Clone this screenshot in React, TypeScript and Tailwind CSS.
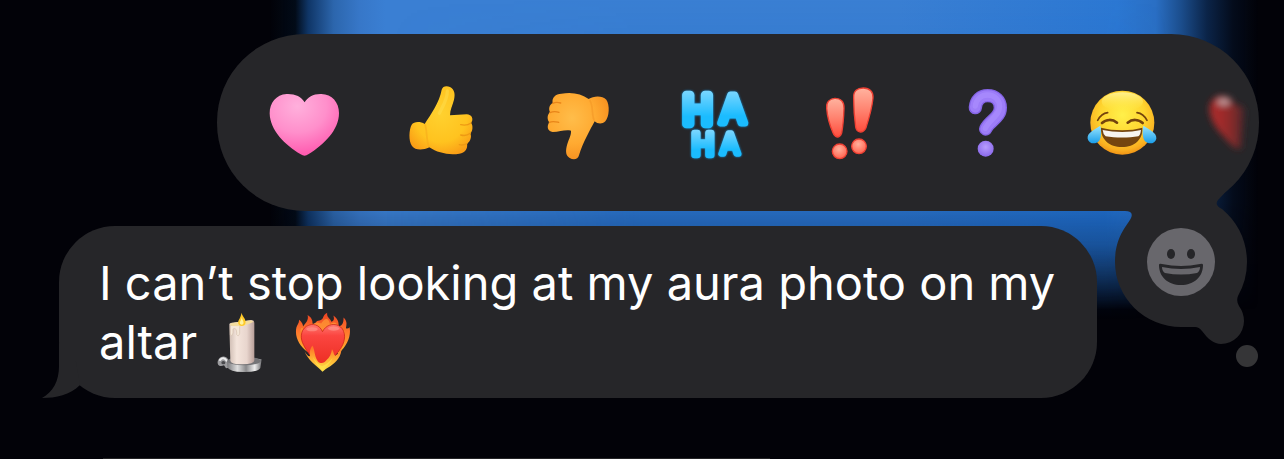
import React from "react";

type IconProps = { className?: string };

const ICON = "h-20 w-20 shrink-0 overflow-visible";

function PinkHeart() {
  return (
    <svg className={ICON} viewBox="42 22 240 240" aria-hidden="true">
      <defs>
        <radialGradient id="pinkHeart" cx="0.4" cy="0.2" r="0.85">
          <stop offset="0" stopColor="#ffb0dc" />
          <stop offset="0.5" stopColor="#ff8fcb" />
          <stop offset="1" stopColor="#ff52ab" />
        </radialGradient>
      </defs>
      <path
        d="M164 80C154 62 134 54 110 55C78 57 59 82 59 113C60 164 105 208 152 236Q164 244 175 236C223 206 267 163 267 112C267 80 246 56 214 55C191 54 173 64 164 80Z"
        fill="url(#pinkHeart)"
      />
    </svg>
  );
}

function ThumbUp() {
  return (
    <svg className={ICON} viewBox="450 22 240 240" aria-hidden="true">
      <defs>
        <radialGradient id="thumbUp" cx="0.5" cy="0.4" r="0.65">
          <stop offset="0" stopColor="#ffd12f" />
          <stop offset="0.65" stopColor="#ffc31f" />
          <stop offset="1" stopColor="#fa9d16" />
        </radialGradient>
      </defs>
      <path
        d="M575 42C578 31 590 29 600 34C614 41 616 56 612 72C608 88 600 102 600 119L650 116C666 116 672 132 663 142C670 149 668 168 661 173C666 184 661 198 651 204C654 219 645 231 628 234C597 239 563 232 538 215C518 225 495 224 486 211C475 195 477 161 485 147C491 138 510 136 524 145C542 116 569 79 575 42Z"
        fill="url(#thumbUp)"
      />
      <path d="M632 147C642 149 655 148 663 142M632 178C642 181 653 179 661 173M628 207C636 209 643 208 651 204" fill="none" stroke="#ee9a14" strokeWidth="4" strokeLinecap="round" />
      <path d="M525 147C532 165 528 192 537 213" fill="none" stroke="#f5a51a" strokeWidth="5" strokeLinecap="round" opacity="0.5" />
      <path d="M592 46C592 74 577 93 568 113" fill="none" stroke="#ffdd4d" strokeWidth="10" strokeLinecap="round" opacity="0.5" />
    </svg>
  );
}

function ThumbDown() {
  return (
    <svg className={ICON} viewBox="18 22 240 240" aria-hidden="true">
      <defs>
        <radialGradient id="thumbDown" cx="0.4" cy="0.38" r="0.7">
          <stop offset="0" stopColor="#ffbd4a" />
          <stop offset="0.55" stopColor="#ffaa31" />
          <stop offset="1" stopColor="#f58b1c" />
        </radialGradient>
      </defs>
      <path
        d="M68 82C65 65 77 55 94 54C126 48 154 54 176 70C191 60 217 59 229 72C240 88 238 123 226 137C217 146 204 146 194 137C182 160 157 203 147 239C144 252 130 254 119 247C105 239 107 222 112 205C117 189 124 178 123 165C104 161 90 169 68 169C53 168 49 152 58 140C51 132 51 117 60 110C55 99 58 88 68 82Z"
        fill="url(#thumbDown)"
      />
      <path d="M68 83C78 78 86 80 92 82M60 111C69 107 78 107 87 110M58 140C68 136 76 138 86 140" fill="none" stroke="#e98519" strokeWidth="4" strokeLinecap="round" />
      <path d="M180 75C190 92 185 118 192 133" fill="none" stroke="#ef9122" strokeWidth="5" strokeLinecap="round" opacity="0.45" />
    </svg>
  );
}

function HaHa() {
  return (
    <svg className={ICON} viewBox="426 22 240 240" aria-hidden="true">
      <defs>
        <linearGradient id="haha" x1="0" y1="0" x2="0" y2="1">
          <stop offset="0.1" stopColor="#7ad6ff" />
          <stop offset="0.65" stopColor="#1bbcff" />
        </linearGradient>
      </defs>
      <g
        className="drop-shadow-[0_0_3px_#1590d8]"
        fill="url(#haha)"
        stroke="url(#haha)"
        fontFamily="Inter, sans-serif"
        fontWeight="400"
        strokeLinejoin="round"
        strokeLinecap="round"
        textAnchor="middle"
      >
        <text x="503" y="145" fontSize="118" strokeWidth="26">H</text>
        <text x="608" y="141" fontSize="113" strokeWidth="21">A</text>
        <text x="519" y="238" fontSize="88" strokeWidth="20">H</text>
        <text x="600" y="236" fontSize="84" strokeWidth="16">A</text>
      </g>
    </svg>
  );
}

function Exclaim() {
  return (
    <svg className={ICON} viewBox="-6 22 240 240" aria-hidden="true">
      <defs>
        <linearGradient id="exclaim" x1="0" y1="0" x2="0" y2="1">
          <stop offset="0" stopColor="#ffb39f" />
          <stop offset="0.5" stopColor="#ff8370" />
          <stop offset="1" stopColor="#ff4d3d" />
        </linearGradient>
        <radialGradient id="exclaimDot" cx="0.45" cy="0.35" r="0.6">
          <stop offset="0" stopColor="#ffb09c" />
          <stop offset="1" stopColor="#ff6a56" />
        </radialGradient>
      </defs>
      <g stroke="#ee4033" strokeWidth="4">
        <path d="M50 98C48 79 59 69 74 68C92 67 103 78 102 98C101 126 99 152 95 172Q91 184 82 184Q74 183 69 171C59 148 52 124 50 98Z" fill="url(#exclaim)" />
        <path d="M131 66C130 46 142 37 160 37C180 37 190 49 189 67C186 99 177 128 168 156Q162 169 151 169Q139 168 137 154C133 125 131 96 131 66Z" fill="url(#exclaim)" />
        <circle cx="89" cy="227" r="22" fill="url(#exclaimDot)" />
        <circle cx="147" cy="212" r="22" fill="url(#exclaimDot)" />
      </g>
    </svg>
  );
}

function Question() {
  return (
    <svg className={ICON} viewBox="402 22 240 240" aria-hidden="true">
      <defs>
        <radialGradient id="questionDot" cx="0.5" cy="0.4" r="0.6">
          <stop offset="0" stopColor="#b79cff" />
          <stop offset="1" stopColor="#8a69ea" />
        </radialGradient>
      </defs>
      <g fill="none" strokeLinecap="round" strokeLinejoin="round">
        <path d="M496 96C498 73 512 60 533 60C556 60 571 75 571 96C571 127 539 134 527 160" stroke="#8464e4" strokeWidth="40" />
        <path d="M496 95C498 73 512 60 533 60C556 60 571 75 571 96C571 127 539 134 527 160" stroke="#9d7df8" strokeWidth="32" />
        <path d="M496 91C499 69 515 58 533 58C553 58 568 72 569 92C568 122 539 130 526 158" stroke="#a98cfd" strokeWidth="16" opacity="0.75" />
      </g>
      <circle cx="527" cy="219" r="24" fill="url(#questionDot)" />
    </svg>
  );
}

function TearsOfJoy() {
  return (
    <svg className={ICON} viewBox="30 22 240 240" aria-hidden="true">
      <defs>
        <radialGradient id="joyFace" cx="0.5" cy="0.38" r="0.64">
          <stop offset="0" stopColor="#fff04a" />
          <stop offset="0.55" stopColor="#ffd52f" />
          <stop offset="0.85" stopColor="#fab021" />
          <stop offset="1" stopColor="#ee8c12" />
        </radialGradient>
        <linearGradient id="joyTear" x1="0" y1="0" x2="0" y2="1">
          <stop offset="0" stopColor="#9be6ff" />
          <stop offset="1" stopColor="#1a9eea" />
        </linearGradient>
        <linearGradient id="joyShine" x1="0" y1="0" x2="0" y2="1">
          <stop offset="0" stopColor="#fff7a8" stopOpacity="0.8" />
          <stop offset="1" stopColor="#fff04a" stopOpacity="0" />
        </linearGradient>
      </defs>
      <circle cx="157" cy="141" r="96" fill="url(#joyFace)" />
      <ellipse cx="157" cy="78" rx="62" ry="28" fill="url(#joyShine)" />
      <g fill="none" stroke="#74430d" strokeLinecap="round">
        <path d="M83 134C90 121 99 113 113 111M231 134C224 121 215 113 201 111" strokeWidth="5" />
        <path d="M96 142C108 130 128 130 141 141M173 141C186 130 206 130 218 142" strokeWidth="8" />
      </g>
      <path d="M93 156C130 166 184 166 217 156C220 190 194 214 156 214C118 214 91 190 93 156Z" fill="#75450f" />
      <path d="M98 163C134 171 180 171 213 163C212 173 209 180 205 182C176 187 136 187 107 182Q99 175 98 163Z" fill="#f7f4ef" />
      <path d="M91 150C94 166 96 190 84 199C73 207 56 203 53 189C50 171 72 163 91 150Z" fill="url(#joyTear)" />
      <path d="M220 150C217 166 216 190 228 199C239 207 256 203 259 189C261 171 240 163 220 150Z" fill="url(#joyTear)" />
    </svg>
  );
}

function FadingHeart() {
  return (
    <svg className={ICON} viewBox="354 22 240 240" aria-hidden="true">
      <defs>
        <linearGradient id="fadingHeart" x1="0" x2="1">
          <stop offset="0.3" stopColor="#a42a2a" />
          <stop offset="0.65" stopColor="#842a2a" />
          <stop offset="1" stopColor="#462729" />
        </linearGradient>
        <filter id="fadingBlur" x="-0.5" y="-0.4" width="2" height="1.8">
          <feGaussianBlur stdDeviation="9" />
        </filter>
      </defs>
      <g filter="url(#fadingBlur)">
        <path d="M418 99C420 71 440 58 462 60C482 62 490 75 497 90Q518 82 524 108L514 218Q500 224 486 210C452 174 418 140 418 99Z" fill="url(#fadingHeart)" />
        <ellipse cx="461" cy="78" rx="20" ry="12" fill="#b99091" />
      </g>
    </svg>
  );
}

function Candle({ className }: IconProps) {
  return (
    <svg className={className} viewBox="50 48 141 183" role="img" aria-label="candle">
      <defs>
        <linearGradient id="wax" x1="0" x2="1">
          <stop offset="0" stopColor="#cfbdb3" />
          <stop offset="0.3" stopColor="#f4e5dc" />
          <stop offset="0.7" stopColor="#e8d5cd" />
          <stop offset="1" stopColor="#b89f99" />
        </linearGradient>
        <linearGradient id="metal" x1="0" x2="1">
          <stop offset="0" stopColor="#77777a" />
          <stop offset="0.3" stopColor="#dedede" />
          <stop offset="0.55" stopColor="#89898b" />
          <stop offset="0.8" stopColor="#eeeeee" />
          <stop offset="1" stopColor="#707073" />
        </linearGradient>
      </defs>
      <path d="M74 208C58 216 51 202 57 191C63 180 80 178 86 190L96 214L80 217Z" fill="#9c9c9f" />
      <path d="M62 192Q72 180 82 194" fill="none" stroke="#ededed" strokeWidth="6" strokeLinecap="round" />
      <ellipse cx="72" cy="200" rx="6" ry="5" fill="#4a4a4d" />
      <path d="M83 194Q130 180 187 190L183 216Q176 229 130 228Q91 228 84 214Z" fill="url(#metal)" />
      <ellipse cx="134" cy="195" rx="50" ry="13" fill="#747477" />
      <path d="M90 88Q88 79 101 80L155 72Q165 71 165 82V193Q165 205 129 205Q93 205 93 194Z" fill="url(#wax)" />
      <path d="M92 88Q119 99 163 77L155 73L101 80Q91 81 92 88Z" fill="#f4dda0" />
      <path d="M93 90V117Q99 123 101 111V99Q110 93 112 108V116Q118 124 121 112V91" fill="#f5e8d9" stroke="#d4c0ad" strokeWidth="2" />
      <path d="M126 50C130 62 144 73 137 85C133 92 120 91 117 83C114 73 126 65 126 50Z" fill="#ffc928" />
      <path d="M127 64C129 74 136 78 131 85Q126 88 122 83C120 77 127 72 127 64Z" fill="#fff3a0" />
    </svg>
  );
}

function HeartOnFire({ className }: IconProps) {
  return (
    <svg className={className} viewBox="290 48 165 180" role="img" aria-label="heart on fire">
      <defs>
        <linearGradient id="flame" x1="0" y1="0" x2="0" y2="1">
          <stop offset="0" stopColor="#ed4223" />
          <stop offset="0.5" stopColor="#ff7b2d" />
          <stop offset="1" stopColor="#ffb52e" />
        </linearGradient>
        <linearGradient id="hotHeart" x1="0" y1="0" x2="0" y2="1">
          <stop offset="0" stopColor="#ff7770" />
          <stop offset="0.25" stopColor="#fb4540" />
          <stop offset="1" stopColor="#ea2a1e" />
        </linearGradient>
        <linearGradient id="flameFront" x1="0" y1="0" x2="0" y2="1">
          <stop offset="0" stopColor="#ff6a27" />
          <stop offset="0.5" stopColor="#ffb032" />
          <stop offset="1" stopColor="#ffe14a" />
        </linearGradient>
      </defs>
      <path
        d="M327 166C303 149 288 122 294 94C296 86 302 82 302 71C312 79 313 86 314 91C321 79 331 74 327 57C342 66 341 76 342 83C354 83 350 73 362 73C376 71 370 57 385 50C382 65 395 67 397 77C406 75 406 66 403 58C420 70 418 81 419 89C427 91 434 83 433 64C445 75 442 86 440 96Q446 99 451 93C456 119 444 147 420 169Z"
        fill="url(#flame)"
      />
      <path d="M306 102Q309 88 317 101Q331 75 337 91Q350 73 367 82Q386 55 393 84Q411 71 415 92L437 105L434 140L312 145Z" fill="#ff9a34" opacity="0.7" />
      <path
        d="M371 106C362 85 342 80 324 90C304 103 306 129 315 145C326 170 350 192 366 215Q371 221 377 213C393 191 419 171 431 144C440 123 438 98 418 88C400 80 380 88 371 106Z"
        fill="url(#hotHeart)"
        stroke="#c3190f"
        strokeWidth="2"
      />
      <ellipse cx="340" cy="99" rx="17" ry="6" fill="#ffb0a4" opacity="0.45" />
      <ellipse cx="404" cy="97" rx="17" ry="6" fill="#ffb0a4" opacity="0.45" />
      <path
        d="M318 164C325 177 331 180 334 178C332 166 335 156 341 147C349 159 346 177 357 193C366 203 376 199 383 190C392 182 397 172 399 158C405 166 403 174 409 177C417 172 423 162 427 152C428 178 413 195 395 207Q382 214 371 224C352 206 328 190 318 164Z"
        fill="url(#flameFront)"
      />
      <path d="M341 176C347 190 358 203 370 208C384 203 394 193 401 184Q394 200 371 220Q350 204 341 176Z" fill="#ffe14a" opacity="0.8" />
    </svg>
  );
}

function AddReaction() {
  return (
    <svg className="block w-full overflow-visible" viewBox="1100 190 184 190" aria-hidden="true">
      <path
        d="M1110 180V211H1125Q1134 211 1131 218C1128 225 1115 236 1115 262A66 65 0 0 0 1181 327H1195Q1199 327 1202 331C1208 339 1214 344 1221 344A23 23 0 0 0 1244 321Q1244 313 1239 306Q1236 301 1238 296Q1247 280 1247 262C1247 241 1238 222 1222 209Q1214 205 1218 200L1234 183L1225 180Z"
        fill="#262629"
      />
      <circle cx="1247" cy="356" r="11" fill="#353537" />
      <circle cx="1181" cy="262" r="34" fill="#68676c" />
      <g fill="#262629">
        <ellipse cx="1171" cy="254" rx="4" ry="5" />
        <ellipse cx="1191" cy="254" rx="4" ry="5" />
        <path d="M1159 265Q1159 263 1162 264Q1181 268 1200 264Q1203 263 1203 265C1203 277 1194 285 1181 285C1168 285 1159 277 1159 265Z" />
      </g>
      <path d="M1162 267Q1181 271 1200 267Q1200 271 1197 273Q1181 276 1165 273Q1162 271 1162 267Z" fill="#68676c" />
    </svg>
  );
}

const reactions = [
  { label: "Love", Icon: PinkHeart },
  { label: "Like", Icon: ThumbUp },
  { label: "Dislike", Icon: ThumbDown },
  { label: "Laugh", Icon: HaHa },
  { label: "Emphasize", Icon: Exclaim },
  { label: "Question", Icon: Question },
  { label: "Tears of joy", Icon: TearsOfJoy },
];

export default function App() {
  return (
    <main className="relative isolate flex min-h-screen flex-col overflow-hidden bg-[#020208]">
      <div
        aria-hidden="true"
        className="absolute inset-0 -z-10 bg-[linear-gradient(to_right,transparent_21%,#020b18_23%,#0f3566_24%,#2c66ad_26%,#3777c8_28%,#3a7fd3_30%,#3a7fd3_70%,#2c78d3_87%,#2a6fc4_90%,#1b4d8c_92%,#0b2448_94%,#040c1c_96%,transparent_98%)] [mask-image:linear-gradient(to_bottom,black_0px,black_200px,rgb(0_0_0/0.7)_245px,transparent_310px)]"
      />
      <div
        aria-hidden="true"
        className="absolute inset-x-0 top-0 -z-10 h-80 bg-linear-to-b from-transparent via-[#004aa8]/30 via-70% to-transparent [mask-image:linear-gradient(to_right,transparent_30%,black_50%,black_86%,transparent_91%)]"
      />

      <div className="mt-[34px] mr-[25px] ml-[217px] flex h-[177px] overflow-hidden rounded-[88px] bg-[#262629] pl-[19px]" role="toolbar" aria-label="Reactions">
        {reactions.map(({ label, Icon }) => (
          <button key={label} type="button" aria-label={label} className="flex min-w-0 flex-1 items-center justify-center">
            <Icon />
          </button>
        ))}
        <button type="button" aria-label="Red heart" className="flex w-[71px] shrink-0 items-center">
          <FadingHeart />
        </button>
      </div>

      <div className="flex items-start gap-[3px] pl-[59px]">
        <article className="relative mt-[15px] min-w-0 flex-1 rounded-[56px] bg-[#262629] px-10 py-[27px]">
          <svg className="absolute bottom-0 -left-[17px] h-[60px] w-[60px]" viewBox="0 0 60 60" aria-hidden="true">
            <path d="M0 60C14 60 28 57 38 47L34 24L17 4V28C17 43 11 54 0 60Z" fill="#262629" />
          </svg>
          <p className="relative font-[Inter,sans-serif] text-[47px] leading-[59px] text-white">
            I can’t stop looking at my aura photo on my altar{" "}
            <Candle className="-my-2 ml-1.5 inline-block h-[61px] w-[47px] align-[-6px]" />
            <HeartOnFire className="-my-2 ml-8 inline-block h-[61px] w-[56px] align-[-6px]" />
          </p>
        </article>
        <button type="button" aria-label="Add reaction" className="-mt-[21px] block w-[184px] shrink-0">
          <AddReaction />
        </button>
      </div>

      <div aria-hidden="true" className="absolute bottom-0 left-[8%] h-px w-[52%] bg-[#242426]" />
    </main>
  );
}
